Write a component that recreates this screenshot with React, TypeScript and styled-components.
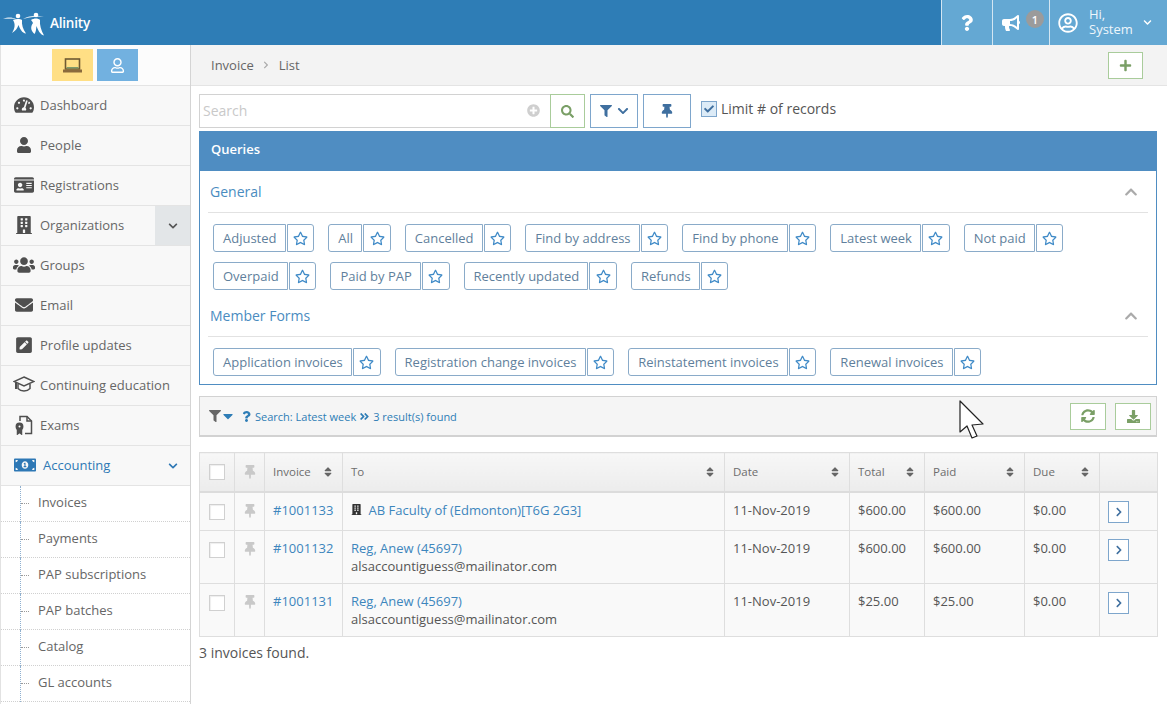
import React from "react";
import styled, { createGlobalStyle } from "styled-components";
import {
  FaTachometerAlt, FaUser, FaIdCard, FaBuilding, FaUsers, FaEnvelope, FaPenSquare,
  FaMoneyBillAlt, FaChevronDown, FaChevronUp, FaChevronRight, FaQuestion, FaBullhorn,
  FaRegUserCircle, FaPlus, FaPlusCircle, FaSearch, FaFilter, FaThumbtack, FaRegStar, FaCheck,
  FaCaretDown, FaAngleDoubleRight, FaSyncAlt, FaDownload, FaSort, FaRegUser,
} from "react-icons/fa";

const Global = createGlobalStyle`
  html, body { margin: 0; padding: 0; height: 100%; background: #fff; }
  body { font-family: "Open Sans", "Liberation Sans", sans-serif; font-size: 13px; color: #555; }
  * { box-sizing: border-box; }
`;

const Page = styled.div`
  position: relative;
  width: 1167px;
  height: 704px;
  overflow: hidden;
  display: flex;
  flex-direction: column;
`;

const Header = styled.header`
  height: 45px;
  flex: none;
  background: #2e7db6;
  display: flex;
  align-items: stretch;
  justify-content: space-between;
`;

const Brand = styled.div`
  display: flex;
  align-items: center;
  gap: 3px;
  padding: 0 0 0 3px;
  color: #fff;
  font-size: 13.5px;
  font-weight: 600;
  letter-spacing: -0.2px;
`;

const HeaderTools = styled.div`
  display: flex;
  align-items: stretch;
`;

const HeaderTool = styled.div<{ $w: number; $start?: boolean }>`
  width: ${(p) => p.$w}px;
  border-left: 1px solid #d3e6f2;
  background: #64a8d3;
  color: #fff;
  display: flex;
  align-items: center;
  justify-content: ${(p) => (p.$start ? "flex-start" : "center")};
  padding-left: ${(p) => (p.$start ? 8 : 0)}px;
  position: relative;
`;

const Megaphone = styled.span`
  display: flex;
  margin-right: 20px;
`;

const Badge = styled.span`
  position: absolute;
  left: 33px;
  top: 10px;
  width: 18px;
  height: 18px;
  border-radius: 50%;
  background: #9b9b9b;
  color: #fff;
  font-size: 11px;
  font-weight: 600;
  display: flex;
  align-items: center;
  justify-content: center;
`;

const Greeting = styled.div`
  font-size: 13px;
  line-height: 15px;
  margin: -2px 9px 0 11px;
  width: 45px;
  color: #eef6fb;
`;

const Body = styled.div`
  flex: 1;
  display: flex;
  min-height: 0;
`;

const Sidebar = styled.aside`
  width: 191px;
  flex: none;
  background: #fff;
  border-left: 1px solid #e2e2e2;
  border-right: 1px solid #d4d4d4;
  overflow: hidden;
`;

const ModeBar = styled.div`
  height: 41px;
  background: #fcfcfc;
  border-bottom: 1px solid #e4e4e4;
  display: flex;
  justify-content: center;
  gap: 4px;
  padding: 4px 2px 0 0;
`;

const ModeButton = styled.div<{ $bg: string; $fg: string }>`
  width: 41px;
  height: 32px;
  background: ${(p) => p.$bg};
  color: ${(p) => p.$fg};
  display: flex;
  align-items: center;
  justify-content: center;
`;

const NavItem = styled.div<{ $active?: boolean }>`
  height: 40px;
  background: #f8f8f8;
  border-bottom: 1px solid #e4e4e4;
  display: flex;
  align-items: center;
  padding-bottom: 2px;
  color: ${(p) => (p.$active ? "#2e78b5" : "#666")};
  position: relative;
`;

const NavIcon = styled.span`
  width: 39px;
  flex: none;
  display: flex;
  justify-content: center;
  padding-left: 6px;
  color: #4f4f4f;
`;

const ActiveIcon = styled(NavIcon)`
  width: 42px;
  color: #2e78b5;
`;

const NavExpand = styled.span<{ $shaded?: boolean }>`
  position: absolute;
  right: 0;
  top: 0;
  bottom: 0;
  width: 35px;
  background: ${(p) => (p.$shaded ? "#e3e6e8" : "transparent")};
  display: flex;
  align-items: center;
  justify-content: center;
`;

const SubItem = styled.div`
  height: 36px;
  background: #fff;
  border-bottom: 1px dotted #d0d0d0;
  padding-left: 37px;
  line-height: 32px;
  color: #666;
  position: relative;
  &::before {
    content: "";
    position: absolute;
    left: 19px;
    top: 0;
    bottom: -1px;
    border-left: 1px dotted #8fb0d0;
  }
  &::after {
    content: "";
    position: absolute;
    left: 20px;
    top: 17px;
    width: 8px;
    border-top: 1px dotted #9a9a9a;
  }
`;

const Main = styled.main`
  flex: 1;
  min-width: 0;
  display: flex;
  flex-direction: column;
`;

const Crumbs = styled.div`
  height: 41px;
  background: #f3f3f3;
  border-bottom: 1px solid #e4e4e4;
  display: flex;
  align-items: center;
  padding: 0 24px 0 20px;
  font-size: 13px;
  color: #666;
`;

const CrumbSep = styled.span`
  margin: 0 8.5px;
  color: #aaa;
  display: flex;
`;

const GhostButton = styled.div<{ $w: number; $h?: number; $tone?: "green" | "blue" }>`
  width: ${(p) => p.$w}px;
  height: ${(p) => p.$h ?? 27}px;
  flex: none;
  background: #fff;
  border: 1px solid ${(p) => (p.$tone === "blue" ? "#7ea6cc" : "#a9cc9b")};
  color: ${(p) => (p.$tone === "blue" ? "#3f6f9f" : "#7a9f66")};
  display: flex;
  align-items: center;
  justify-content: center;
  gap: 5px;
`;

const AddButton = styled(GhostButton)`
  margin-left: auto;
`;

const Content = styled.div`
  padding: 8px 10px 0 8px;
  display: flex;
  flex-direction: column;
`;

const SearchRow = styled.div`
  height: 34px;
  display: flex;
  align-items: stretch;
  margin-bottom: 3px;
`;

const SearchBox = styled.div`
  width: 351px;
  border: 1px solid #d2d2d2;
  border-right: none;
  background: #fff;
  display: flex;
  align-items: center;
  justify-content: space-between;
  padding: 0 10px 2px 3px;
  font-size: 14px;
  color: #c9c9c9;
`;

const FilterGap = styled.div`
  width: 5px;
`;

const Check = styled.span`
  width: 16px;
  height: 16px;
  margin-left: 10px;
  border: 1px solid #7ea6cc;
  background: #dcebf7;
  color: #3f6f9f;
  display: flex;
  align-items: center;
  justify-content: center;
  align-self: center;
  position: relative;
  top: -2px;
`;

const LimitLabel = styled.span`
  margin-left: 4px;
  align-self: center;
  font-size: 14px;
  position: relative;
  top: -3px;
  color: #555;
`;

const Panel = styled.section`
  border: 1px solid #4f8dc2;
  height: 254px;
  background: #fff;
`;

const PanelHead = styled.div`
  height: 39px;
  background: #4f8dc2;
  color: #fff;
  font-weight: 600;
  font-size: 13px;
  line-height: 34px;
  padding-left: 11px;
`;

const GroupHead = styled.div`
  margin: 0 8px;
  height: 42px;
  border-bottom: 1px solid #e2e2e2;
  padding: 0 10px 0 2px;
  display: flex;
  align-items: center;
  justify-content: space-between;
  color: #4a8cbf;
  font-size: 14px;
`;

const Chips = styled.div<{ $pad?: number }>`
  display: flex;
  flex-wrap: wrap;
  align-content: flex-start;
  gap: 10px 14px;
  padding: 11px 8px ${(p) => p.$pad ?? 0}px 13px;
  height: ${(p) => (p.$pad ? "auto" : "82px")};
`;

const Chip = styled.div`
  display: flex;
  gap: 1px;
  height: 28px;
`;

const ChipLabel = styled.div`
  border: 1px solid #8aabc9;
  border-radius: 3px 0 0 3px;
  padding: 0 8.25px 0 9px;
  line-height: 26px;
  color: #5f7f9c;
  font-size: 13px;
  white-space: nowrap;
`;

const ChipStar = styled.div`
  width: 27.5px;
  border: 1px solid #8aabc9;
  border-radius: 0 3px 3px 0;
  color: #3f8ac7;
  display: flex;
  align-items: center;
  justify-content: center;
`;

const ResultBar = styled.div`
  margin-top: 11px;
  height: 41px;
  background: #f5f5f5;
  border: 1px solid #d2d2d2;
  border-bottom-width: 2px;
  display: flex;
  align-items: center;
  padding: 0 5px 0 9px;
  font-size: 11px;
  color: #2e7db6;
  gap: 5px;
`;

const FunnelIcons = styled.span`
  display: flex;
  align-items: center;
  color: #666;
`;

const CaretBlue = styled.span`
  color: #2e7db6;
  display: flex;
  margin-left: -1px;
`;

const ResultText = styled.span`
  display: flex;
  align-items: center;
  gap: 3px;
  flex: 1;
  white-space: nowrap;
`;

const ResultActions = styled.span`
  display: flex;
  gap: 9px;
`;

const Table = styled.table`
  margin-top: 15px;
  width: 958px;
  border-collapse: collapse;
  table-layout: fixed;
  font-size: 13px;
  border: 1px solid #dedede;
`;

const HeadCell = styled.th`
  height: 39px;
  padding: 0 8px;
  background: linear-gradient(#f7f7f7, #ececec);
  border: 1px solid #dedede;
  border-bottom: 2px solid #dcdcdc;
  font-weight: 400;
  font-size: 11.5px;
  color: #666;
  text-align: left;
`;

const HeadInner = styled.div`
  display: flex;
  align-items: center;
  justify-content: space-between;
  color: #6d6d6d;
`;

const Cell = styled.td<{ $tall?: boolean }>`
  height: ${(p) => (p.$tall ? 53 : 39)}px;
  padding: 8px 8px 0;
  border: 1px solid #dedede;
  background: #f9f9f9;
  vertical-align: top;
  color: #555;
  line-height: 18px;
`;

const CenterCell = styled(Cell)`
  padding: 11px 0 0;
`;

const CenterHead = styled(HeadCell)`
  padding: 0;
`;

const Centered = styled.div`
  display: flex;
  justify-content: center;
  color: #c9c9c9;
`;

const Box = styled.span`
  display: block;
  width: 16px;
  height: 16px;
  background: #fff;
  border: 1px solid #d0d0d0;
  box-shadow: inset 1px 1px 1px #eee;
`;

const Link = styled.span`
  color: #3d86bd;
`;

const OrgLine = styled.div`
  display: flex;
  align-items: center;
  gap: 6.5px;
  color: #333;
`;

const Footnote = styled.div`
  margin-top: 6px;
  font-size: 14px;
  color: #555;
`;

const Cursor = styled.svg`
  position: absolute;
  left: 958px;
  top: 400px;
`;

const ExamIcon = () => (
  <svg width="20" height="20" viewBox="0 0 20 20" fill="none" stroke="#4f4f4f" strokeWidth="1.5">
    <path d="M6 6 V1.5 H13 L17.5 6 V18.5 H11" />
    <path d="M13 1.5 V6 H17.5" />
    <circle cx="5.5" cy="11.5" r="3.2" fill="#4f4f4f" />
    <circle cx="5.5" cy="11.5" r="1" fill="#fff" stroke="none" />
    <path d="M3.5 14 V19 L5.5 17.5 L7.5 19 V14" fill="#4f4f4f" />
  </svg>
);

const CapIcon = () => (
  <svg width="22" height="17" viewBox="0 0 22 17" fill="none" stroke="#4f4f4f" strokeWidth="1.5">
    <path d="M11 1 L21 5.5 L11 10 L1 5.5 Z" />
    <path d="M5 8 V12.5 C8 15.8 14 15.8 17 12.5 V8" />
    <path d="M3 6.5 V13" strokeWidth="2" />
  </svg>
);

const LaptopIcon = () => (
  <svg width="19" height="15" viewBox="0 0 19 15">
    <rect x="2.5" y="1" width="14" height="10" fill="none" stroke="#6f5a32" strokeWidth="1.6" />
    <rect x="3.5" y="9" width="12" height="1.5" fill="#7f9a6a" />
    <rect x="0" y="11.5" width="19" height="3" fill="#8a6a3c" />
  </svg>
);

const nav = [
  { label: "Dashboard", icon: <FaTachometerAlt size={20} /> },
  { label: "People", icon: <FaUser size={16} /> },
  { label: "Registrations", icon: <FaIdCard size={20} /> },
  { label: "Organizations", icon: <FaBuilding size={18} />, shaded: true },
  { label: "Groups", icon: <FaUsers size={22} /> },
  { label: "Email", icon: <FaEnvelope size={18} /> },
  { label: "Profile updates", icon: <FaPenSquare size={18} /> },
  { label: "Continuing education", icon: <CapIcon /> },
  { label: "Exams", icon: <ExamIcon /> },
];

const subs = ["Invoices", "Payments", "PAP subscriptions", "PAP batches", "Catalog", "GL accounts"];

const general = ["Adjusted", "All", "Cancelled", "Find by address", "Find by phone", "Latest week", "Not paid", "Overpaid", "Paid by PAP", "Recently updated", "Refunds"];
const member = ["Application invoices", "Registration change invoices", "Reinstatement invoices", "Renewal invoices"];

const cols = [35, 30, 78, 382, 125, 75, 100, 75, 58];
const heads = ["Invoice", "To", "Date", "Total", "Paid", "Due"];

const rows = [
  { id: "#1001133", org: "AB Faculty of (Edmonton)[T6G 2G3]", total: "$600.00", paid: "$600.00" },
  { id: "#1001132", name: "Reg, Anew (45697)", total: "$600.00", paid: "$600.00" },
  { id: "#1001131", name: "Reg, Anew (45697)", total: "$25.00", paid: "$25.00" },
];

const Logo = () => (
  <svg width="44" height="26" viewBox="0 0 44 26" fill="#fff">
    <path d="M0 8.8 C5 7 9 7 13 9 C9 8.6 5 8.6 0 8.8 Z" opacity="0.85" />
    <path d="M20 9 C26 5.5 33 5 41 6.5 C33 6.2 26 7 20 9 Z" opacity="0.85" />
    <circle cx="15" cy="6" r="2.3" />
    <circle cx="33" cy="5" r="2.3" />
    <path d="M10 10 C13 8.8 17 8.8 19 10 C18.5 15 20 19 23 23.5 C19 23 17 19 15.5 15 C14.5 18 12.5 21 9 23 C12 18 12.5 14 10 10 Z" />
    <path d="M28 10 C31 8 35 8 37 10 C36.5 15 38 20 41 25.5 C37 24.5 35 20 33.5 16 C33 19 33 22 31.5 24 C28 21 27 17 30 13 C29.5 12 29 11 28 10 Z" />
  </svg>
);

const CursorArrow = () => (
  <Cursor width="28" height="40" viewBox="0 0 28 40">
    <path d="M2 1 L2 32 L9 26 L14 38 L19 36 L14 25 L25 24 Z" fill="#fff" stroke="#222" strokeWidth="1.2" strokeLinejoin="round" />
  </Cursor>
);

const QueryChip = ({ label }: { label: string }) => (
  <Chip>
    <ChipLabel>{label}</ChipLabel>
    <ChipStar><FaRegStar size={15} /></ChipStar>
  </Chip>
);

export default function App() {
  return (
    <Page>
      <Global />
      <Header>
        <Brand><Logo />Alinity</Brand>
        <HeaderTools>
          <HeaderTool $w={51}><FaQuestion size={16} /></HeaderTool>
          <HeaderTool $w={57}>
            <Megaphone><FaBullhorn size={18} /></Megaphone>
            <Badge>1</Badge>
          </HeaderTool>
          <HeaderTool $w={118} $start>
            <FaRegUserCircle size={20} />
            <Greeting>Hi,<br />System</Greeting>
            <FaChevronDown size={9} />
          </HeaderTool>
        </HeaderTools>
      </Header>
      <Body>
        <Sidebar>
          <ModeBar>
            <ModeButton $bg="#ffdf85" $fg="#7d6a35"><LaptopIcon /></ModeButton>
            <ModeButton $bg="#72b1e0" $fg="#fff"><FaRegUser size={15} /></ModeButton>
          </ModeBar>
          {nav.map((n) => (
            <NavItem key={n.label}>
              <NavIcon>{n.icon}</NavIcon>
              {n.label}
              {n.shaded && <NavExpand $shaded><FaChevronDown size={10} color="#555" /></NavExpand>}
            </NavItem>
          ))}
          <NavItem $active>
            <ActiveIcon><FaMoneyBillAlt size={22} /></ActiveIcon>
            Accounting
            <NavExpand><FaChevronDown size={10} color="#2e78b5" /></NavExpand>
          </NavItem>
          {subs.map((s) => <SubItem key={s}>{s}</SubItem>)}
        </Sidebar>
        <Main>
          <Crumbs>
            Invoice
            <CrumbSep><FaChevronRight size={8} /></CrumbSep>
            List
            <AddButton $w={35}><FaPlus size={13} /></AddButton>
          </Crumbs>
          <Content>
            <SearchRow>
              <SearchBox>Search<FaPlusCircle size={13} color="#cfcfcf" /></SearchBox>
              <GhostButton $w={35} $h={34}><FaSearch size={13} /></GhostButton>
              <FilterGap />
              <GhostButton $w={48} $h={34} $tone="blue"><FaFilter size={12} /><FaChevronDown size={12} /></GhostButton>
              <FilterGap />
              <GhostButton $w={48} $h={34} $tone="blue"><FaThumbtack size={14} /></GhostButton>
              <Check><FaCheck size={10} /></Check>
              <LimitLabel>Limit # of records</LimitLabel>
            </SearchRow>
            <Panel>
              <PanelHead>Queries</PanelHead>
              <GroupHead>General<FaChevronUp size={14} color="#aaa" /></GroupHead>
              <Chips>{general.map((g) => <QueryChip key={g} label={g} />)}</Chips>
              <GroupHead>Member Forms<FaChevronUp size={14} color="#aaa" /></GroupHead>
              <Chips $pad={8}>{member.map((g) => <QueryChip key={g} label={g} />)}</Chips>
            </Panel>
            <ResultBar>
              <FunnelIcons><FaFilter size={12} /><CaretBlue><FaCaretDown size={16} /></CaretBlue></FunnelIcons>
              <ResultText>
                <FaQuestion size={11} />
                Search: Latest week
                <FaAngleDoubleRight size={11} />
                3 result(s) found
              </ResultText>
              <ResultActions>
                <GhostButton $w={36}><FaSyncAlt size={14} /></GhostButton>
                <GhostButton $w={36}><FaDownload size={13} /></GhostButton>
              </ResultActions>
            </ResultBar>
            <Table>
              <colgroup>
                {cols.map((w, i) => <col key={i} style={{ width: w }} />)}
              </colgroup>
              <thead>
                <tr>
                  <CenterHead><Centered><Box /></Centered></CenterHead>
                  <CenterHead><Centered><FaThumbtack size={14} /></Centered></CenterHead>
                  {heads.map((h) => (
                    <HeadCell key={h}>
                      <HeadInner>{h}<FaSort size={12} color="#666" /></HeadInner>
                    </HeadCell>
                  ))}
                  <HeadCell />
                </tr>
              </thead>
              <tbody>
                {rows.map((r) => (
                  <tr key={r.id}>
                    <CenterCell $tall={!r.org}><Centered><Box /></Centered></CenterCell>
                    <CenterCell $tall={!r.org}><Centered><FaThumbtack size={14} /></Centered></CenterCell>
                    <Cell $tall={!r.org}><Link>{r.id}</Link></Cell>
                    <Cell $tall={!r.org}>
                      {r.org ? (
                        <OrgLine><FaBuilding size={11} /><Link>{r.org}</Link></OrgLine>
                      ) : (
                        <>
                          <Link>{r.name}</Link>
                          <br />
                          alsaccountiguess@mailinator.com
                        </>
                      )}
                    </Cell>
                    <Cell $tall={!r.org}>11-Nov-2019</Cell>
                    <Cell $tall={!r.org}>{r.total}</Cell>
                    <Cell $tall={!r.org}>{r.paid}</Cell>
                    <Cell $tall={!r.org}>$0.00</Cell>
                    <Cell $tall={!r.org}>
                      <GhostButton $w={21} $h={22} $tone="blue"><FaChevronRight size={10} /></GhostButton>
                    </Cell>
                  </tr>
                ))}
              </tbody>
            </Table>
            <Footnote>3 invoices found.</Footnote>
          </Content>
        </Main>
      </Body>
      <CursorArrow />
    </Page>
  );
}
